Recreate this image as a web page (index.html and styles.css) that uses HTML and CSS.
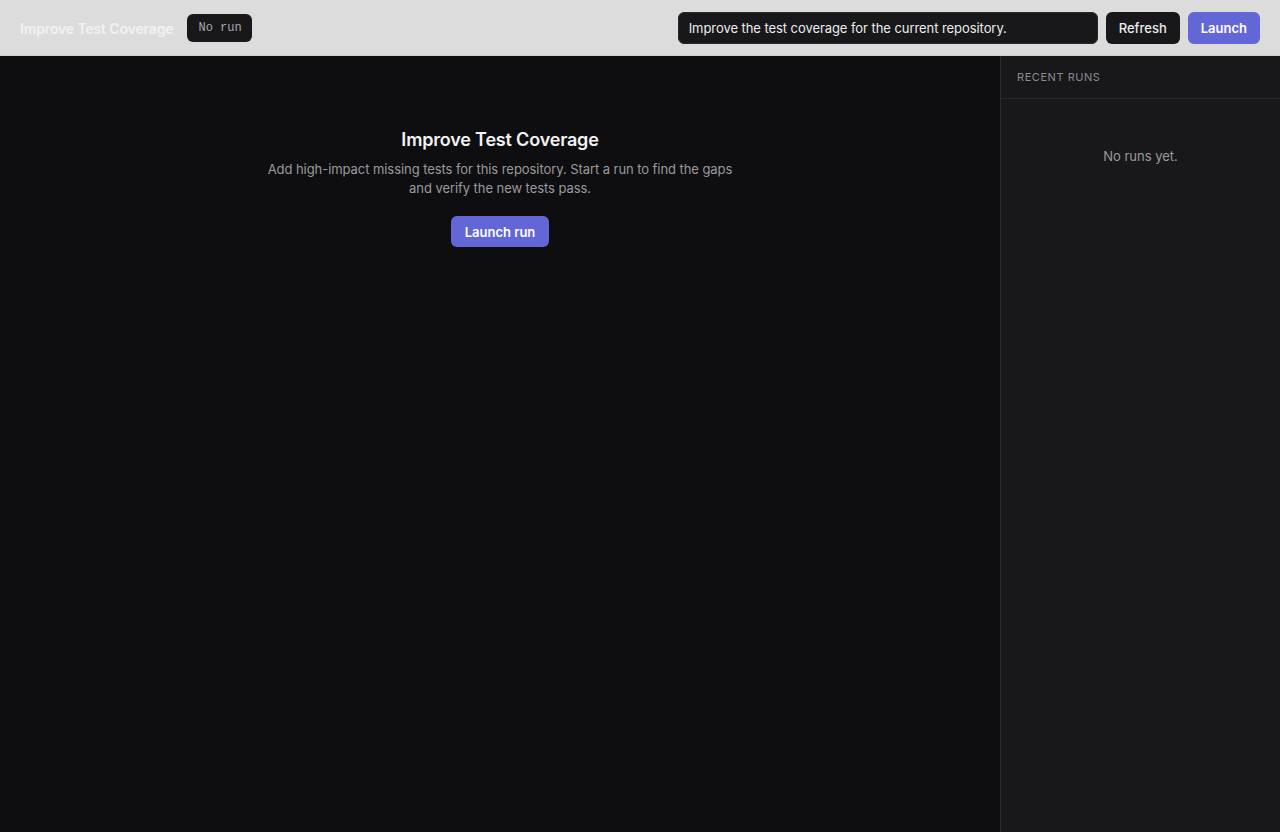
FILE: index.html
```html
<!DOCTYPE html>
<html lang="en">
<head>
<meta charset="utf-8">
<title>Improve Test Coverage</title>
<link rel="stylesheet" href="styles.css">
</head>
<body>
<div class="app">
  <header class="topbar">
    <div class="topbar-left">
      <h1 class="app-title">Improve Test Coverage</h1>
      <span class="status-badge">No run</span>
    </div>
    <div class="topbar-right">
      <input class="prompt-input" type="text" value="Improve the test coverage for the current repository.">
      <button class="btn btn-dark">Refresh</button>
      <button class="btn btn-primary">Launch</button>
    </div>
  </header>
  <div class="body">
    <main class="main">
      <section class="empty">
        <h2 class="empty-title">Improve Test Coverage</h2>
        <p class="empty-text">Add high-impact missing tests for this repository. Start a run to find the gaps and verify the new tests pass.</p>
        <button class="btn btn-primary btn-launch">Launch run</button>
      </section>
    </main>
    <aside class="sidebar">
      <div class="sidebar-head">Recent runs</div>
      <div class="sidebar-empty">No runs yet.</div>
    </aside>
  </div>
</div>
</body>
</html>
```
FILE: styles.css
```css
* { box-sizing: border-box; }

html, body {
  margin: 0;
  height: 100%;
}

body {
  font-family: Inter, "Noto Sans", sans-serif;
  background: #0e0e10;
  color: #e8e8ea;
}

.app {
  display: flex;
  flex-direction: column;
  height: 100vh;
}

.topbar {
  height: 56px;
  flex: none;
  display: flex;
  align-items: center;
  justify-content: space-between;
  padding: 0 20px;
  background: #dcdcdc;
  border-bottom: 1px solid #cfcfcf;
}

.topbar-left {
  display: flex;
  align-items: center;
  gap: 14px;
}

.app-title {
  margin: 0;
  padding-top: 2px;
  font-size: 14px;
  font-weight: 600;
  letter-spacing: -0.01em;
  color: #f2f2f2;
}

.status-badge {
  display: inline-flex;
  align-items: center;
  height: 28px;
  padding: 0 10px 0 11px;
  border-radius: 6px;
  background: #18181b;
  color: #a8a8ac;
  font-family: "Liberation Mono", "DejaVu Sans Mono", monospace;
  font-size: 12px;
}

.topbar-right {
  display: flex;
  align-items: center;
  gap: 8px;
}

.prompt-input {
  width: 420px;
  height: 32px;
  padding: 0 10px;
  border: 1px solid #2a2a2e;
  border-radius: 6px;
  background: #18181b;
  color: #ececee;
  font-family: Inter, "Noto Sans", sans-serif;
  font-size: 13px;
  letter-spacing: -0.005em;
  outline: none;
}

.btn {
  height: 32px;
  padding: 0 13px;
  border: none;
  border-radius: 6px;
  font-family: Inter, "Noto Sans", sans-serif;
  font-size: 13px;
  cursor: pointer;
}

.btn-dark {
  background: #18181b;
  color: #ececee;
  font-weight: 500;
}

.btn-primary {
  background: #6366d6;
  color: #ffffff;
  font-weight: 600;
}

.body {
  flex: 1;
  display: flex;
  min-height: 0;
}

.main {
  flex: 1;
  background: #0e0e10;
}

.empty {
  display: flex;
  flex-direction: column;
  align-items: center;
  padding-top: 73px;
  text-align: center;
}

.empty-title {
  margin: 0;
  font-size: 18px;
  font-weight: 600;
  letter-spacing: -0.01em;
  color: #f2f2f4;
}

.empty-text {
  margin: 10px 0 18px;
  max-width: 480px;
  font-size: 13px;
  line-height: 19px;
  letter-spacing: -0.005em;
  color: #9a9a9e;
}

.btn-launch {
  height: 31px;
  padding: 0 14px;
}

.sidebar {
  width: 280px;
  flex: none;
  background: #18181a;
  border-left: 1px solid #2a2a2d;
}

.sidebar-head {
  height: 43px;
  display: flex;
  align-items: center;
  padding: 0 16px;
  border-bottom: 1px solid #2a2a2d;
  font-size: 11px;
  letter-spacing: 0.05em;
  text-transform: uppercase;
  color: #8a8a8e;
}

.sidebar-empty {
  padding: 49px 16px;
  text-align: center;
  font-size: 13px;
  color: #9a9a9e;
}
```
